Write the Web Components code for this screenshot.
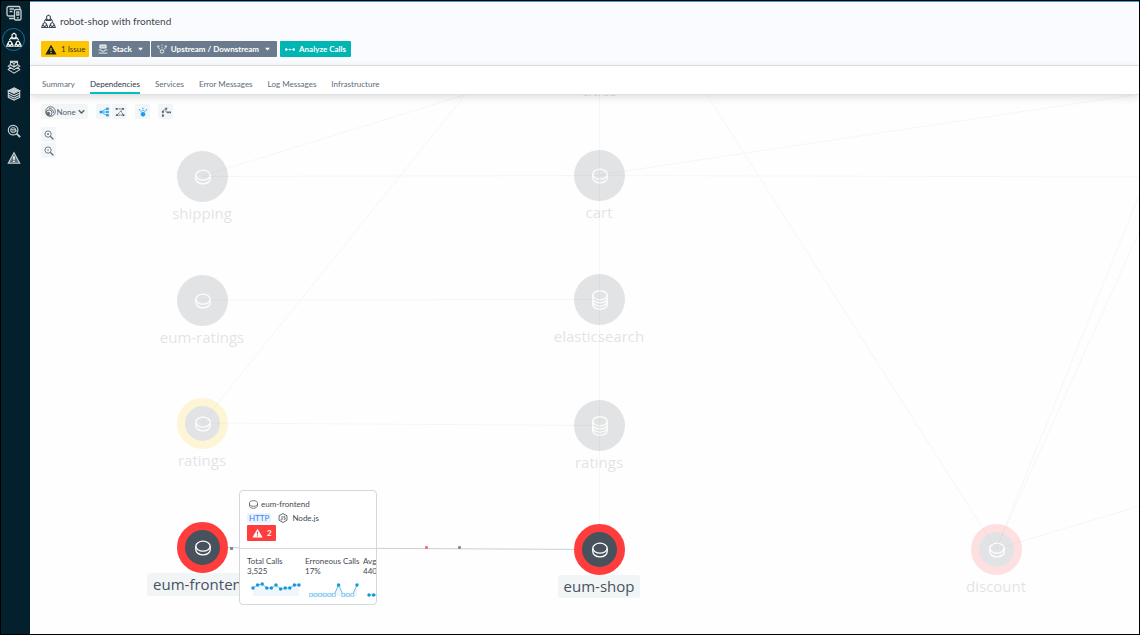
<!DOCTYPE html>
<html lang="en">
<head>
<meta charset="utf-8">
<meta name="viewport" content="width=device-width, initial-scale=1">
<title>robot-shop with frontend - Dependencies</title>
<style>
  html, body { margin: 0; height: 100%; }
  body { font-family: Lato, "Open Sans", sans-serif; color: #4a5661; background: #fff; }
</style>
</head>
<body>
<app-shell>
  <side-nav slot="nav"></side-nav>
  <app-header slot="header">robot-shop with frontend</app-header>
  <tab-bar slot="tabs">
    <tab-link>Summary</tab-link>
    <tab-link active>Dependencies</tab-link>
    <tab-link>Services</tab-link>
    <tab-link>Error Messages</tab-link>
    <tab-link>Log Messages</tab-link>
    <tab-link>Infrastructure</tab-link>
  </tab-bar>
  <dependency-map>
    <map-toolbar slot="tools"></map-toolbar>
    <service-node x="569" y="-42" dim>cities</service-node>
    <service-node x="172" y="81" dim>shipping</service-node>
    <service-node x="569" y="80" dim>cart</service-node>
    <service-node x="172" y="205" dim>eum-ratings</service-node>
    <service-node x="569" y="204" kind="database" dim>elasticsearch</service-node>
    <service-node x="172" y="328" status="warning" dim>ratings</service-node>
    <service-node x="569" y="330" kind="database" dim>ratings</service-node>
    <service-node x="966" y="454" status="error" dim>discount</service-node>
    <service-node x="172" y="452" status="error">eum-frontend</service-node>
    <service-node x="569" y="454" status="error">eum-shop</service-node>
    <service-card>eum-frontend</service-card>
  </dependency-map>
</app-shell>

<script>
const define = (name, html, setup) => {
  const template = document.createElement('template');
  template.innerHTML = html;
  customElements.define(name, class extends HTMLElement {
    constructor() {
      super();
      this.attachShadow({ mode: 'open' }).append(template.content.cloneNode(true));
    }
    connectedCallback() { if (setup) setup(this, this.shadowRoot); }
  });
};

const icons = {
  disc: ['0 0 16 15', '<ellipse cx="8" cy="5.7" rx="7.2" ry="5"/><path d="M.8 5.7v3.6c0 2.8 3.2 5 7.2 5s7.2-2.2 7.2-5V5.7"/>'],
  database: ['0 0 16 20', '<ellipse cx="8" cy="5.3" rx="7.2" ry="4.5"/><path d="M.8 5.3v9.4c0 2.5 3.2 4.5 7.2 4.5s7.2-2 7.2-4.5V5.3M.8 8.4c0 2.5 3.2 4.5 7.2 4.5s7.2-2 7.2-4.5M.8 11.6c0 2.5 3.2 4.5 7.2 4.5s7.2-2 7.2-4.5"/>'],
  apps: ['0 0 16 16', '<path d="M6 2.600L8 1.200l2 1.400v2.600L8 6.500 6 5.200zM5.600 5L3.400 8M10.400 5l2.200 3M5.200 6.800h5.600M2.300 10.300l1.700-1.300 1.700 1.300v2L4 13.500l-1.700-1.200zM10.300 10.300L12 9l1.700 1.300v2L12 13.500l-1.700-1.200zM1.700 11.500L.8 14.300h6.400l-.9-2.800M9.700 11.500l-.9 2.800h6.400l-.9-2.800" stroke-width="1.100"/>'],
  devices: ['0 0 16 16', '<rect x="1" y="1.500" width="13" height="9.500" rx="1.500"/><path d="M3.500 4h4.500M3.500 6.500h3M3 13.500h5"/><rect x="8.500" y="4.500" width="6.500" height="10.500" rx="1.300" fill="#03202c"/><path d="M10.800 12.800h2M10.800 7h2v3h-2z"/>'],
  platform: ['0 0 16 16', '<path d="M4 1.500h8v4L8 8 4 5.500zM4 1.500l4 2.500 4-2.500M8 4v4M4 5L1.500 7 8 11l6.500-4L12 5M3.500 8.500L1.500 11 8 15l6.500-4-2-2.500"/>'],
  stack: ['0 0 16 16', '<path d="M8 1l6.500 3.200L8 7.400 1.500 4.200z" fill="currentColor"/><path d="M1.500 4.200v7.600L8 15l6.500-3.200V4.200M1.500 6.800L8 10l6.500-3.200M1.500 9.400L8 12.600l6.500-3.200"/>'],
  magnify: ['0 0 16 16', '<circle cx="7" cy="7" r="5.500"/><circle cx="7" cy="7" r="3" stroke-width="1"/><path d="M11 11l4 4" stroke-width="2.200"/><path d="M4.500 6h6M4.500 8h8" stroke-width="1.400"/>'],
  zoomin: ['0 0 16 16', '<circle cx="6.500" cy="6.500" r="5"/><path d="M10.200 10.200l4.800 4.800" stroke-width="2.200"/><path d="M5 6.500h3M6.500 5v3"/>'],
  zoomout: ['0 0 16 16', '<circle cx="6.500" cy="6.500" r="5"/><path d="M10.200 10.200l4.800 4.800" stroke-width="2.200"/><path d="M5 6.500h3"/>'],
  alert: ['0 0 16 16', '<path d="M8 2l6.500 12h-13z" fill="currentColor" fill-opacity=".45"/><path d="M8 6v4M8 11.200v1.500" stroke-width="1.800" stroke="#fff"/>'],
  warn: ['0 0 16 14', '<path d="M8 .8L15.500 13.500H.5z" fill="currentColor" stroke="none"/><path d="M8 5v4.200M8 10.400v1.600" stroke="var(--mark, #ffc400)" stroke-width="1.600"/>'],
  server: ['0 0 16 16', '<path d="M3 1.500h10v5H3z" fill="currentColor" fill-opacity=".6"/><path d="M1 9.500h4l1 2h4l1-2h4M1 14.500h14"/>'],
  stream: ['0 0 16 16', '<circle cx="8" cy="12" r="2.800"/><circle cx="2" cy="4" r="1.300"/><circle cx="14" cy="4" r="1.300"/><path d="M3 6.500l2.500 3.500M13 6.500L10.500 10M8 1v2M8 5v2" stroke-dasharray="2 1"/>'],
  dots: ['0 0 16 6', '<circle cx="2" cy="3" r="1.500" fill="currentColor"/><circle cx="8" cy="3" r="1" fill="currentColor"/><circle cx="14" cy="3" r="1.500" fill="currentColor"/><path d="M4 3h2M10 3h2" stroke-width="1"/>'],
  caret: ['0 0 10 6', '<path d="M0 .5h10L5 6z" fill="currentColor" stroke="none"/>'],
  chevron: ['0 0 10 8', '<path d="M1 1.500l4 4 4-4" stroke-width="2"/>'],
  globe: ['0 0 16 16', '<circle cx="8" cy="8" r="7"/><circle cx="6" cy="10" r="4.300"/><circle cx="5" cy="11" r="1.800" fill="currentColor"/><path d="M6 3.500c4 0 6.500 3 6.500 6.500"/>'],
  share: ['0 0 16 16', '<path d="M3 8h10M3 8l10-5.500M3 8l10 5.500"/><circle cx="3" cy="8" r="1.800" fill="currentColor"/><path d="M12 1.500h3v2.500h-3zM12 6.800h3v2.500h-3zM12 12h3v2.500h-3z" fill="currentColor"/>'],
  graph: ['0 0 16 16', '<path d="M2.500 3h10L3 13h10.500M9.500 6.500l4 6.500" stroke-dasharray="3 .7"/><path d="M1 1.500h3v3H1zM11.500 1.500h3v3h-3zM1.500 11.500h3v3h-3zM12 11.500h3v3h-3z" fill="currentColor" stroke="none"/>'],
  burst: ['0 0 16 16', '<circle cx="8" cy="11.500" r="3.200" fill="currentColor"/><path d="M8 1v1.800M8 4.500v1.800M2 4l1.500 1.300M4.500 6.300l1 1M14 4l-1.500 1.300M11.500 6.300l-1 1" stroke-width="2"/>'],
  route: ['0 0 16 16', '<path d="M3 14V8l3-5h2v5.500h7" stroke-dasharray="3 1"/><path d="M1.500 12.500h3v3h-3zM7 1h3v3H7zM10 7h2.500v3H10zM13.500 7H16v3h-2.500zM1.500 6h3v3h-3z" fill="currentColor" stroke="none"/>'],
  node: ['0 0 16 16', '<path d="M8 .8l6.300 3.600v7.200L8 15.200l-6.300-3.600V4.400z"/><path d="M6.500 5v5.200c0 1.200-2 1.200-2.200 0M11.700 6.200c-.8-1.500-3-1-2.700.3s2.800.9 2.800 2.500-2.500 1.700-3 .3"/>']
};
customElements.define('ui-icon', class extends HTMLElement {
  connectedCallback() {
    if (this.shadowRoot) return;
    const [box, shapes] = icons[this.getAttribute('name')];
    this.attachShadow({ mode: 'open' }).innerHTML =
      `<style>:host{display:inline-block;flex:none;width:10px;height:10px}svg{display:block;width:100%;height:100%}</style>
       <svg viewBox="${box}" fill="none" stroke="currentColor" stroke-width="1.3" aria-hidden="true">${shapes}</svg>`;
  }
});

define('app-shell', `
<style>
  :host { display: grid; grid-template-columns: 29px minmax(0, 1fr); min-height: 100vh; box-sizing: border-box; border: 1px solid #000; }
  .main { display: flex; flex-direction: column; min-width: 0; }
  ::slotted(dependency-map) { flex: 1; }
</style>
<slot name="nav"></slot>
<div class="main"><slot name="header"></slot><slot name="tabs"></slot><slot></slot></div>`);

define('side-nav', `
<style>
  :host { display: block; background: #03202c; color: #c9d1d4; padding-right: 4px; }
  nav { display: flex; flex-direction: column; align-items: center; gap: 4px; }
  a { display: grid; place-items: center; width: 23px; height: 23px; box-sizing: border-box; color: inherit; border-radius: 50%; border: 1px solid transparent; }
  a.on { border-color: #1c6f99; color: #fff; }
  a.split { margin-top: 10px; }
  ui-icon { width: 14px; height: 14px; }
  a.big ui-icon { width: 16px; height: 16px; }
</style>
<nav aria-label="Main">
  <a href="#websites" class="big" aria-label="Websites"><ui-icon name="devices"></ui-icon></a>
  <a href="#applications" class="on big" aria-label="Applications"><ui-icon name="apps"></ui-icon></a>
  <a href="#platforms" aria-label="Platforms"><ui-icon name="platform"></ui-icon></a>
  <a href="#infrastructure" aria-label="Infrastructure"><ui-icon name="stack"></ui-icon></a>
  <a href="#analyze" class="split" aria-label="Analyze"><ui-icon name="magnify"></ui-icon></a>
  <a href="#events" aria-label="Events"><ui-icon name="alert"></ui-icon></a>
</nav>`);

define('app-header', `
<style>
  :host { display: block; background: #fafbfe; border-top: 1px solid #3a9fd0; border-bottom: 1px solid #e3e5e7; padding: 12px 11px 8px; }
  h1 { display: flex; align-items: center; gap: 4px; margin: 0 0 12px; font-size: 10px; line-height: 15px; font-weight: 400; color: #3c4750; }
  h1 ui-icon { width: 15px; height: 15px; }
  .row { display: flex; gap: 3px; }
  .group { display: flex; gap: 1px; }
  button { display: flex; align-items: center; gap: 4px; height: 16px; padding: 0 5px; border: 0; border-radius: 1px; font: inherit; font-weight: 700; font-size: 8px; line-height: 16px; color: #fff; background: #6b7b8e; white-space: nowrap; }
  button.issue { padding: 0 4px; background: #ffc400; color: #3c3a20; font-weight: 400; }
  button.call { background: #00b5b2; }
  .group button { padding: 0 7px 0 6px; }
  .issue ui-icon { width: 12px; height: 11px; color: #14202a; }
  .caret { width: 5px; height: 4px; margin-left: 2px; }
  .dots { height: 5px; }
</style>
<h1><ui-icon name="apps"></ui-icon><slot></slot></h1>
<div class="row">
  <button class="issue"><ui-icon name="warn"></ui-icon>1 Issue</button>
  <div class="group">
    <button aria-haspopup="menu"><ui-icon name="server"></ui-icon>Stack<ui-icon class="caret" name="caret"></ui-icon></button>
    <button aria-haspopup="menu"><ui-icon name="stream"></ui-icon>Upstream / Downstream<ui-icon class="caret" name="caret"></ui-icon></button>
  </div>
  <button class="call"><ui-icon class="dots" name="dots"></ui-icon>Analyze Calls</button>
</div>`);

define('tab-bar', `
<style>
  :host { display: block; position: relative; z-index: 1; background: #fff; border-bottom: 1px solid #dfe1e2; box-shadow: 0 2px 8px rgba(0,0,0,.14); }
  nav { display: flex; gap: 15px; height: 28px; padding: 0 12px; }
</style>
<nav aria-label="Views"><slot></slot></nav>`);

define('tab-link', `
<style>
  :host { display: block; }
  a { display: block; box-sizing: border-box; height: 28px; padding-top: 12px; font-size: 8px; line-height: 12px; color: #5b6b7a; text-decoration: none; white-space: nowrap; border-bottom: 2px solid transparent; }
  :host([active]) a { color: #2c3a45; border-color: #00c0bb; }
</style>
<a href="#view"><slot></slot></a>`);

define('dependency-map', `
<style>
  :host { display: block; position: relative; overflow: hidden; min-height: 538px; box-sizing: border-box; background: #fefefe; }
  .edges { position: absolute; inset: 0; width: 100%; height: 100%; }
  ::slotted(map-toolbar) { position: relative; }
</style>
<svg class="edges" aria-hidden="true">
  <g stroke="#f5f6f6" fill="none">
    <path d="M172 81L435 0M172 81.500L569 80.500L1110 82M569 80L1110 -1M172 205L569 204.500M172 328L435 0M172 328L569 330.500M569.500 0V454M966 454L677 0M966 454L1110 98M966 454L1110 135M966 454L1110 411"/>
  </g>
  <path d="M172 452.500L569 454.500" stroke="#c9cfd4" fill="none"/>
  <rect x="200" y="452" width="3" height="3" fill="#87898c"/>
  <rect x="395" y="451" width="3" height="3" rx="1" fill="#ff6b70"/>
  <rect x="428" y="451" width="3" height="3" rx="1" fill="#888b8f"/>
</svg>
<slot></slot>
<slot name="tools"></slot>`);

define('map-toolbar', `
<style>
  :host { display: block; padding: 9px 11px; color: #55626e; }
  .row { display: flex; gap: 8px; }
  .pair { display: flex; gap: 1px; }
  button, .pick { display: flex; align-items: center; justify-content: center; width: 15px; height: 15px; padding: 0; border: 0; border-radius: 2px; background: #f3f6f7; color: inherit; }
  button.on { color: #1ba0e8; }
  .pick { width: 47px; gap: 1px; }
  .pick ui-icon { width: 11px; height: 11px; }
  .pick .chev { width: 7px; height: 6px; }
  select { appearance: none; border: 0; margin: 0; padding: 0; background: none; font: inherit; font-size: 8px; line-height: 12px; color: inherit; }
  .zoom { display: flex; flex-direction: column; gap: 1px; margin-top: 8px; }
</style>
<div class="row">
  <label class="pick"><ui-icon name="globe"></ui-icon><select aria-label="Grouping"><option>None</option></select><ui-icon class="chev" name="chevron"></ui-icon></label>
  <div class="pair">
    <button class="on" aria-label="Tree layout"><ui-icon name="share"></ui-icon></button>
    <button aria-label="Free layout"><ui-icon name="graph"></ui-icon></button>
  </div>
  <button class="on" aria-label="Highlight"><ui-icon name="burst"></ui-icon></button>
  <button aria-label="Routes"><ui-icon name="route"></ui-icon></button>
</div>
<div class="zoom">
  <button aria-label="Zoom in"><ui-icon name="zoomin"></ui-icon></button>
  <button aria-label="Zoom out"><ui-icon name="zoomout"></ui-icon></button>
</div>`);

define('service-node', `
<style>
  :host { position: absolute; display: flex; flex-direction: column; align-items: center; width: 0; }
  :host([dim]) { opacity: .15; }
  .disc { display: grid; place-items: center; flex: none; width: 51px; height: 51px; box-sizing: border-box; border-radius: 50%; background: #48525d; color: #fff; border: 0 solid #ff3d3d; }
  :host([status]) .disc { border-width: 8px; }
  :host([status="warning"]) .disc { border-color: #ffc400; }
  ui-icon { width: 16px; height: 16px; padding: 1px 0 0 2px; }
  :host([kind="database"]) ui-icon { height: 20px; }
  .label { padding: 0 6px; line-height: 23px; font-family: "Open Sans", sans-serif; font-size: 15px; color: #48525d; background: #f1f5f6; border-radius: 3px; white-space: nowrap; }
  :host([dim]) .label { background: none; }
</style>
<div class="disc"></div>
<div class="label"><slot></slot></div>`, (host, root) => {
  host.style.left = host.getAttribute('x') + 'px';
  host.style.top = host.getAttribute('y') - 25 + 'px';
  const disc = root.querySelector('.disc');
  if (!disc.firstChild) disc.innerHTML = `<ui-icon name="${host.getAttribute('kind') || 'disc'}"></ui-icon>`;
});

define('service-card', `
<style>
  :host { position: absolute; left: 209px; top: 395px; width: 138px; height: 115px; box-sizing: border-box; overflow: hidden; background: #fff; border: 1px solid #d3d8dc; border-radius: 4px; font-size: 8px; line-height: 10px; color: #3f4a54; }
  .top { height: 58px; box-sizing: border-box; padding: 6px 7px 0; border-bottom: 1px solid #d3d8dc; }
  .line { display: flex; align-items: center; gap: 3px; height: 14px; padding-left: 2px; }
  .tech { padding: 0; gap: 4px; }
  .http { padding: 0 2px; color: #3a86f0; background: #eaf2fe; border-radius: 2px; margin-right: 3px; }
  .line ui-icon { width: 9px; height: 9px; }
  .tech ui-icon { width: 10px; height: 10px; }
  .bad { display: flex; align-items: center; gap: 4px; width: 19px; height: 16px; padding: 0 5px; border-radius: 1px; color: #fff; background: #ff3d3d; font-weight: 700; }
  .bad ui-icon { --mark: #ff3d3d; width: 11px; }
  dl { display: grid; grid-template-columns: 58px 58px 50px; margin: 0; padding: 7px 7px 0; white-space: nowrap; }
  dt, dd { margin: 0; }
  svg { display: block; margin-top: 5px; width: 52px; height: 18px; overflow: visible; }
</style>
<div class="top">
  <div class="line"><ui-icon name="disc"></ui-icon><slot></slot></div>
  <div class="line tech"><span class="http">HTTP</span><ui-icon name="node"></ui-icon><span>Node.js</span></div>
  <div class="bad"><ui-icon name="warn"></ui-icon>2</div>
</div>
<dl>
  <div><dt>Total Calls</dt><dd>3,525</dd><svg class="calls" aria-hidden="true"></svg></div>
  <div><dt>Erroneous Calls</dt><dd>17%</dd><svg class="errors" aria-hidden="true"></svg></div>
  <div><dt>Avg</dt><dd>440</dd><svg class="latency" aria-hidden="true"></svg></div>
</dl>`, (host, root) => {
  const draw = (name, points, area, hollow = () => false) => {
    const line = points.map(p => p.join(',')).join(' ');
    const first = points[0][0], last = points[points.length - 1][0];
    root.querySelector(name).innerHTML =
      (area ? `<polygon points="${first},15 ${line} ${last},15" fill="#eff7fc"/>` : '') +
      `<polyline points="${line}" fill="none" stroke="#6bbce9"/>` +
      points.map(([x, y]) => hollow(y)
        ? `<rect x="${x - 1.5}" y="${y - 1.5}" width="3" height="3" fill="#e4f3fc" stroke="#8ccbef" stroke-width=".8"/>`
        : `<circle cx="${x}" cy="${y}" r="1.700" fill="#1495dc"/>`).join('');
  };
  const step = (ys, x0) => ys.map((y, i) => [x0 + i * 4.6, y]);
  draw('.calls', step([7, 4, 3, 7, 7, 4, 8, 7, 7, 4, 4], 6), true);
  draw('.errors', step([14, 14, 14, 14, 14, 14, 4, 14, 14, 14, 4], 6), true, y => y > 10);
  draw('.latency', step([14, 14, 14], 6), false);
});
</script>
</body>
</html>
